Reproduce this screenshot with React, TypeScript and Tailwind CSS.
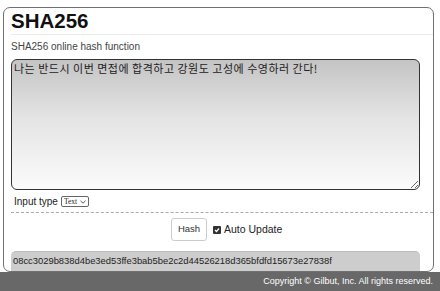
const HASH = "08cc3029b838d4be3ed53ffe3bab5be2c2d44526218d365bfdfd15673e27838f";

export default function App() {
	return (
		<div className="w-[440px] h-[291px] bg-white overflow-hidden flex flex-col font-['Liberation_Sans',Arial,sans-serif] text-[#222]">
			<div className="ml-[3px] mt-[7px] w-[431px] h-[265px] border-[1.5px] border-[#707070] rounded-[7px] flex flex-col pl-[7px]">
				<h1 className="text-[20.5px] font-bold leading-[24px] pt-[1px] pb-[1px] border-b border-[#ececec] text-[#111]">
					SHA256
				</h1>
				<p className="mt-[6px] text-[10px] leading-[12px] text-[#444]">
					SHA256 online hash function
				</p>
				<textarea
					readOnly
					defaultValue="나는 반드시 이번 면접에 합격하고 강원도 고성에 수영하러 간다!"
					className="mt-[6px] w-[409px] h-[131px] shrink-0 border-[1.5px] border-[#333] rounded-[6px] bg-gradient-to-b from-[#c4c4c4] via-[#e4e4e4] via-45% to-[#fbfbfb] px-[2px] py-[1px] text-[11px] leading-[14px] tracking-[0.5px] text-[#222] font-['Noto_Sans_CJK_KR',sans-serif] resize-y outline-none"
				/>
				<div className="mt-[5px] flex items-center gap-[3px] pl-[3px] h-[13px]">
					<span className="text-[10px] text-[#222]">Input type</span>
					<span className="border border-[#666] rounded-[2px] px-[2px] h-[11px] flex items-center gap-[3px] text-[7.5px] font-['Liberation_Serif',serif] text-[#222]">
						Text
						<svg width="6" height="4" viewBox="0 0 6 4" fill="none" stroke="#444" strokeWidth="0.9">
							<path d="M0.5 0.8 L3 3.2 L5.5 0.8" />
						</svg>
					</span>
				</div>
				<div className="mt-[4px] border-t-[1.5px] border-dashed border-[#aaa]" />
				<div className="mt-[5px] flex items-center pl-[160px] gap-[6px]">
					<button className="w-[36px] h-[23px] border border-[#ccc] rounded-[3px] bg-white text-[9.5px] text-[#333]">
						Hash
					</button>
					<span className="flex items-center gap-[3px] text-[10.5px] text-[#222]">
						<span className="w-[8px] h-[8px] bg-[#333] rounded-[1px] flex items-center justify-center">
							<svg width="6" height="6" viewBox="0 0 6 6" fill="none" stroke="white" strokeWidth="1.2">
								<path d="M1 3 L2.5 4.5 L5 1.5" />
							</svg>
						</span>
						Auto Update
					</span>
				</div>
				<div className="mt-[10px] w-[409px] h-[22px] bg-[#cdcdcd] rounded-t-[5px] border-t border-[#bbb] flex items-center px-[2px] text-[9.4px] text-[#222]">
					{HASH}
				</div>
			</div>
			<div className="h-[19px] bg-[#686868] flex items-center justify-end pr-[7px] text-[9px] text-white">
				Copyright © Gilbut, Inc. All rights reserved.
			</div>
		</div>
	);
}
